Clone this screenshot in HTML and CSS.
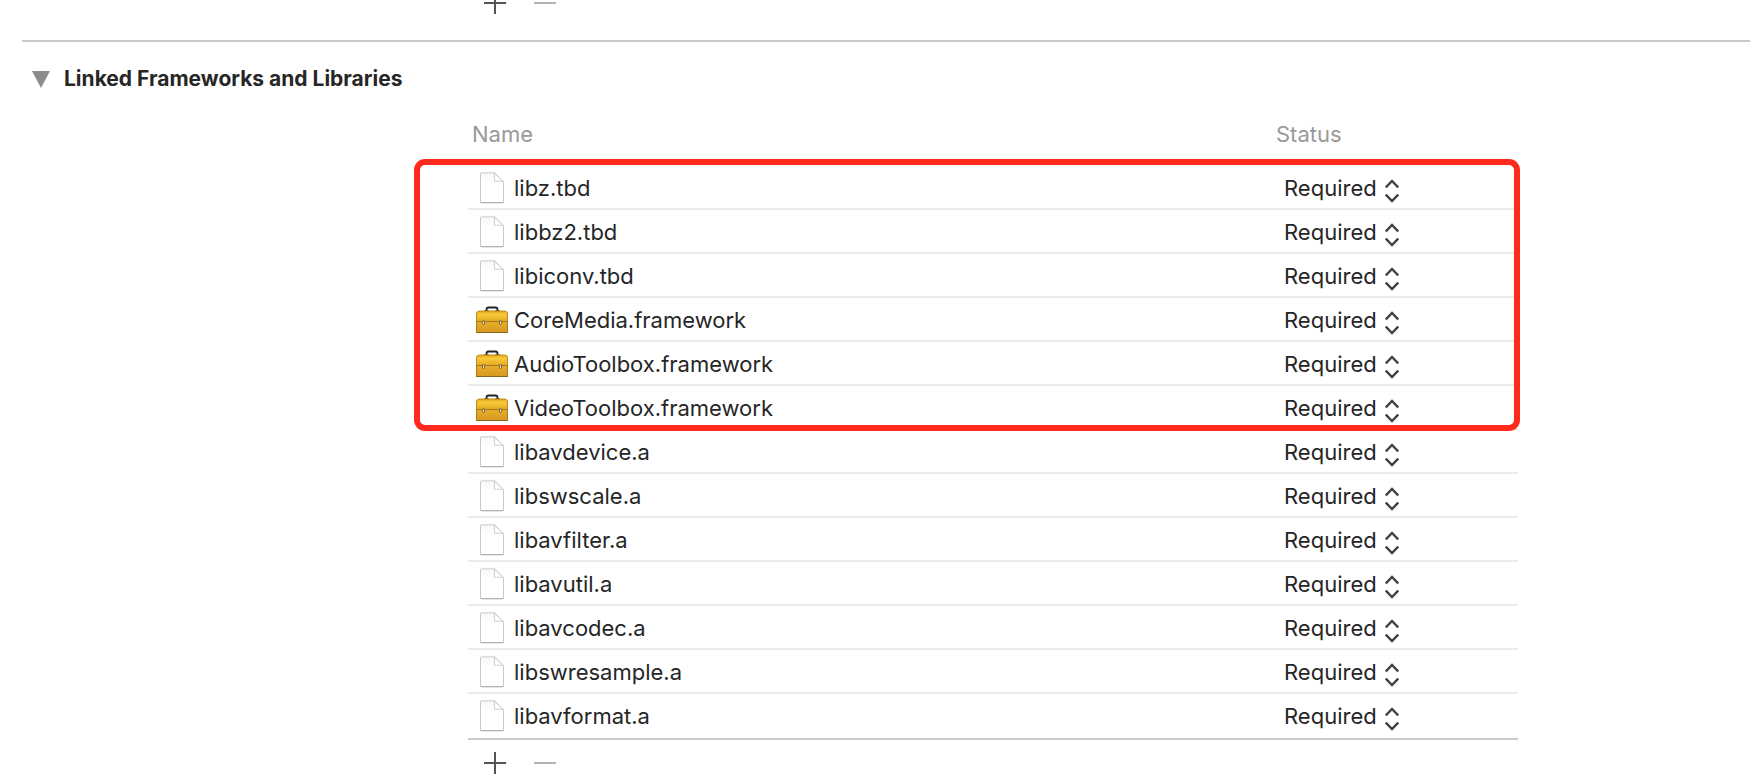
FILE: index.html
```html
<!DOCTYPE html>
<html lang="en">
<head>
<meta charset="utf-8">
<title>Linked Frameworks and Libraries</title>
<link rel="stylesheet" href="styles.css">
</head>
<body>
<svg class="defs" aria-hidden="true">
  <defs>
    <linearGradient id="paper" x1="0" y1="0" x2="0" y2="1">
      <stop offset="0" stop-color="#f7f7f7"/><stop offset=".35" stop-color="#fff"/><stop offset="1" stop-color="#fff"/>
    </linearGradient>
    <linearGradient id="lid" x1="0" y1="0" x2="0" y2="1">
      <stop offset="0" stop-color="#e0a51f"/><stop offset=".3" stop-color="#f8cb3a"/><stop offset="1" stop-color="#e2a520"/>
    </linearGradient>
    <linearGradient id="box" x1="0" y1="0" x2="0" y2="1">
      <stop offset="0" stop-color="#e8ae2a"/><stop offset="1" stop-color="#d6981f"/>
    </linearGradient>
  </defs>
  <symbol id="file" viewBox="0 0 32 32">
    <path d="M5 31.5h22" stroke="#e4e4e4" fill="none"/>
    <path d="M5.500 .8H18.500L27.500 9.500V30.500H4.500V1.800Q4.500 .8 5.500 .8Z" fill="url(#paper)" stroke="#c9c9c9"/>
    <path d="M4.500 30.500h23" stroke="#b5b5b5" fill="none"/>
    <path d="M18.500 1.200V9.200H27Z" fill="#fff" stroke="#cdcdcd"/>
  </symbol>
  <symbol id="toolbox" viewBox="0 0 32 28">
    <path d="M10.500 5V3.500Q10.500 1.500 12.500 1.500H19.500Q21.500 1.500 21.500 3.500V5" fill="none" stroke="#222" stroke-width="1.800"/>
    <path d="M8.500 5h4M19.500 5h4" stroke="#333" stroke-width="2"/>
    <path d="M.5 16V8Q.5 5 3.500 5H28.500Q31.500 5 31.500 8V16Z" fill="url(#lid)" stroke="#c18a1c"/>
    <path d="M.5 15.500H31.500V26.500H.5Z" fill="url(#box)" stroke="#b07c1c"/>
    <path d="M0 15.500H32" stroke="#a87314"/>
    <path d="M0 26.500H32" stroke="#8a6420"/>
    <rect x="6.500" y="14.500" width="2" height="4" rx="1" fill="#ddd" stroke="#6b5a35"/>
    <rect x="23.500" y="14.500" width="2" height="4" rx="1" fill="#ddd" stroke="#6b5a35"/>
  </symbol>
  <symbol id="updown" viewBox="0 0 14 24">
    <path d="M.8 8.500L7 2L13.200 8.500M.8 15.500L7 22L13.200 15.500" fill="none" stroke="#424242" stroke-width="2.400"/>
  </symbol>
  <symbol id="plus" viewBox="0 0 22 22"><path d="M0 11H22M11 0V22" stroke="#555" stroke-width="2"/></symbol>
  <symbol id="minus" viewBox="0 0 22 22"><path d="M0 11H22" stroke="#b3b3b3" stroke-width="2"/></symbol>
</svg>

<section class="previous">
  <div class="actions">
    <button type="button" aria-label="Add item"><svg><use href="#plus"/></svg></button>
    <button type="button" aria-label="Remove item"><svg><use href="#minus"/></svg></button>
  </div>
</section>

<section class="linked">
  <h2><button type="button" class="disclosure" aria-expanded="true"><svg viewBox="0 0 18 17"><path d="M0 0H18L9 17Z" fill="#8c8c8c"/></svg>Linked Frameworks and Libraries</button></h2>
  <div class="content">
    <table>
      <thead><tr><th>Name</th><th class="status">Status</th></tr></thead>
      <tbody class="highlighted" id="system"></tbody>
      <tbody id="bundled"></tbody>
    </table>
    <div class="actions">
      <button type="button" aria-label="Add library"><svg><use href="#plus"/></svg></button>
      <button type="button" aria-label="Remove library"><svg><use href="#minus"/></svg></button>
    </div>
  </div>
</section>
<script src="libraries.js"></script>
</body>
</html>
```
FILE: styles.css
```css
* { box-sizing: border-box; }
body {
  margin: 0;
  background: #fff;
  color: #262626;
  font: 22px/28px Inter, "Liberation Sans", sans-serif;
  overflow-x: hidden;
}
button, select { font: inherit; color: inherit; border: 0; background: none; padding: 0; margin: 0; }
svg { display: block; }
.defs { position: absolute; width: 0; height: 0; }
.previous { height: 40px; overflow: hidden; padding-left: 468px; display: flex; align-items: flex-start; }
.previous .actions { margin-top: -20px; }
.actions { display: flex; gap: 28px; padding: 12px 16px; }
.actions svg { width: 22px; height: 22px; }
.linked { margin-left: 22px; border-top: 2px solid #c9c9c9; }
h2 { margin: 0; padding: 23px 10px 0; font-size: 21px; font-weight: 700; }
.disclosure { display: flex; align-items: center; gap: 14px; }
.disclosure svg { width: 18px; height: 17px; }
.content { margin: 19px 232px 0 446px; }
table { width: 100%; border-collapse: separate; border-spacing: 0; table-layout: fixed; }
th { height: 54px; padding: 0 4px 10px; text-align: left; font-weight: 400; color: #999; }
.status { width: 242px; padding-left: 0; }
td { height: 44px; padding: 2px 8px 0; border-bottom: 2px solid #eaeaea; }
tbody:last-child tr:last-child td { height: 46px; padding-top: 0; border-color: #c9c9c9; }
.name { display: flex; align-items: center; gap: 6px; }
.name svg { width: 32px; height: 32px; }
.name .toolbox { height: 28px; }
.picker { display: flex; align-items: center; gap: 8px; }
.picker select { appearance: none; outline: 0; }
.picker svg { width: 14px; height: 24px; margin-top: 6px; pointer-events: none; }
.highlighted { position: relative; }
.highlighted::after {
  content: "";
  position: absolute;
  inset: -7px -2px -1px -54px;
  border: 6px solid #ff2a1c;
  border-radius: 11px;
  pointer-events: none;
}
```
FILE: libraries.js
```js
const groups = {
  system: ["libz.tbd", "libbz2.tbd", "libiconv.tbd", "CoreMedia.framework", "AudioToolbox.framework", "VideoToolbox.framework"],
  bundled: ["libavdevice.a", "libswscale.a", "libavfilter.a", "libavutil.a", "libavcodec.a", "libswresample.a", "libavformat.a"]
};

for (const [id, names] of Object.entries(groups)) {
  document.getElementById(id).innerHTML = names.map(name => {
    const icon = name.endsWith(".framework") ? "toolbox" : "file";
    return `<tr>
      <td><div class="name"><svg class="${icon}" aria-hidden="true"><use href="#${icon}"/></svg><span>${name}</span></div></td>
      <td><div class="picker"><select aria-label="Status of ${name}"><option>Required</option></select><svg aria-hidden="true"><use href="#updown"/></svg></div></td>
    </tr>`;
  }).join("");
}
```
